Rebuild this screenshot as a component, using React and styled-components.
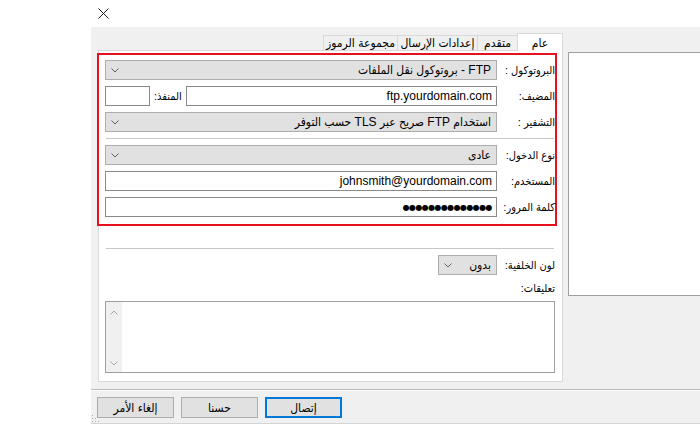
import React from 'react';
import styled, { createGlobalStyle } from 'styled-components';

const ARABIC = '"Liberation Sans", "DejaVu Sans Condensed", "DejaVu Sans", sans-serif';

const GlobalStyle = createGlobalStyle`
  html, body { margin: 0; padding: 0; background: #fff; }
  body { font-family: ${ARABIC}; font-size: 12px; color: #000; }
  * { box-sizing: border-box; }
`;

const Page = styled.div`
  width: 700px;
  height: 426px;
  overflow: hidden;
  display: flex;
  padding-left: 91px;
`;

const Window = styled.div`
  width: 609px;
  display: flex;
  flex-direction: column;
`;

const TitleBar = styled.div`
  height: 27px;
  flex-shrink: 0;
  padding: 8px 0 0 7px;
  display: flex;
  align-items: flex-start;
`;

const Dialog = styled.div`
  direction: rtl;
  background: #f0f0f0;
  height: 397px;
  display: flex;
  flex-direction: column;
  overflow: hidden;
  position: relative;
  border-bottom: 1px solid #d4d4d4;
`;

const Main = styled.div`
  display: flex;
  align-items: flex-start;
  gap: 5px;
  padding: 6px 0 0 7px;
`;

const SiteList = styled.div`
  flex: 1;
  margin-right: -3px;
  margin-top: 19px;
  height: 244px;
  background: #fff;
  border: 1px solid #a0a0a0;
`;

const Notebook = styled.div`
  width: 465px;
  flex-shrink: 0;
  display: flex;
  flex-direction: column;
`;

const TabRow = styled.div`
  display: flex;
  align-items: flex-end;
  height: 17px;
`;

const Tab = styled.div`
  width: ${p => p.$w}px;
  height: ${p => (p.$active ? 18 : 15)}px;
  margin-bottom: ${p => (p.$active ? -1 : 0)}px;
  margin-left: -1px;
  background: ${p => (p.$active ? '#fff' : '#f0f0f0')};
  border: 1px solid #d9d9d9;
  border-bottom: none;
  position: relative;
  z-index: ${p => (p.$active ? 1 : 0)};
  display: flex;
  align-items: center;
  justify-content: center;
  white-space: nowrap;
  font-size: 12px;
  font-stretch: condensed;
  line-height: 1;
  overflow: hidden;
`;

const Panel = styled.div`
  height: 332px;
  background: #fff;
  border: 1px solid #d9d9d9;
  display: flex;
  flex-direction: column;
`;

const RedBox = styled.div`
  margin: 2px 5px 0 -2px;
  border: 2px solid #e8101c;
  padding: 5px 0 7px 6px;
`;

const FormGrid = styled.div`
  display: grid;
  grid-template-columns: 52px 1fr;
  column-gap: 6px;
  row-gap: 6px;
`;

const Label = styled.div`
  height: ${p => p.$h || 20}px;
  display: flex;
  align-items: center;
  white-space: nowrap;
  font-size: 11px;
  font-stretch: condensed;
  grid-column: ${p => (p.$full ? '1 / -1' : 'auto')};
`;

const Field = styled.div`
  height: 20px;
  background: #fff;
  border: 1px solid #8a8a8a;
  display: flex;
  align-items: center;
  padding: 0 4px;
  white-space: nowrap;
  overflow: hidden;
  width: ${p => (p.$w ? `${p.$w}px` : 'auto')};
  flex: ${p => (p.$w ? '0 0 auto' : '1')};
`;

const Dots = styled.span`
  font-size: 8px;
  letter-spacing: -0.6px;
  font-family: "DejaVu Sans", sans-serif;
`;

const Select = styled.div`
  height: 20px;
  background: #e1e1e1;
  border: 1px solid #adadad;
  display: flex;
  align-items: center;
  justify-content: space-between;
  padding: 0 5px 0 5px;
  white-space: nowrap;
  font-stretch: condensed;
  width: ${p => (p.$w ? `${p.$w}px` : 'auto')};
`;

const FieldRow = styled.div`
  display: flex;
  align-items: center;
  gap: 4px;
`;

const Separator = styled.div`
  grid-column: 1 / -1;
  height: 1px;
  background: #c6c6c6;
  margin: 0 1px;
`;

const Lower = styled.div`
  padding: 22px 7px 0 6px;
`;

const LowerSep = styled.div`
  height: 1px;
  background: #c6c6c6;
  margin: 0 1px 6px 1px;
`;

const Comments = styled.div`
  grid-column: 1 / -1;
  height: 72px;
  background: #fff;
  border: 1px solid #a0a0a0;
  display: flex;
`;

const CommentText = styled.div`
  flex: 1;
`;

const Scrollbar = styled.div`
  width: 16px;
  background: #f0f0f0;
  display: flex;
  flex-direction: column;
  justify-content: space-between;
  align-items: center;
  padding: 8px 0 6px;
`;

const BottomSep = styled.div`
  margin-top: 7px;
  height: 2px;
  border-top: 1px solid #b9b9b9;
  border-bottom: 1px solid #fff;
`;

const ButtonRow = styled.div`
  display: flex;
  justify-content: flex-end;
  gap: 7px;
  padding: 6px 0 0 6px;
`;

const Button = styled.div`
  width: 77px;
  height: 21px;
  background: #e1e1e1;
  border: ${p => (p.$default ? '2px solid #0078d7' : '1px solid #adadad')};
  display: flex;
  align-items: center;
  justify-content: center;
  white-space: nowrap;
  font-size: 12px;
  font-stretch: condensed;
`;

const Grip = styled.svg`
  position: absolute;
  left: 1px;
  bottom: 1px;
`;

const Chevron = ({ up, color = '#606060' }) => (
  <svg width="8" height="5" viewBox="0 0 8 5">
    <polyline
      points={up ? '0.5,4.5 4,1 7.5,4.5' : '0.5,0.5 4,4 7.5,0.5'}
      fill="none"
      stroke={color}
      strokeWidth="1"
    />
  </svg>
);

const CloseIcon = () => (
  <svg width="11" height="11" viewBox="0 0 11 11">
    <line x1="0.5" y1="0.5" x2="10.5" y2="10.5" stroke="#1a1a1a" strokeWidth="1" />
    <line x1="10.5" y1="0.5" x2="0.5" y2="10.5" stroke="#1a1a1a" strokeWidth="1" />
  </svg>
);

export default function App() {
  return (
    <>
      <GlobalStyle />
      <Page>
        <Window>
          <TitleBar>
            <CloseIcon />
          </TitleBar>
          <Dialog>
            <Main>
              <SiteList />
              <Notebook>
                <TabRow>
                  <Tab $w={46} $active>عام</Tab>
                  <Tab $w={41}>متقدم</Tab>
                  <Tab $w={81}>إعدادات الإرسال</Tab>
                  <Tab $w={75}>مجموعة الرموز</Tab>
                </TabRow>
                <Panel>
                  <RedBox>
                    <FormGrid>
                      <Label>البروتوكول :</Label>
                      <Select>
                        <span>FTP - بروتوكول نقل الملفات</span>
                        <Chevron />
                      </Select>

                      <Label>المضيف:</Label>
                      <FieldRow>
                        <Field>ftp.yourdomain.com</Field>
                        <Label>المنفذ:</Label>
                        <Field $w={45} />
                      </FieldRow>

                      <Label>التشفير :</Label>
                      <Select>
                        <span>استخدام FTP صريح عبر TLS حسب التوفر</span>
                        <Chevron />
                      </Select>

                      <Separator />

                      <Label>نوع الدخول:</Label>
                      <Select>
                        <span>عادى</span>
                        <Chevron />
                      </Select>

                      <Label>المستخدم:</Label>
                      <Field>johnsmith@yourdomain.com</Field>

                      <Label>كلمة المرور:</Label>
                      <Field>
                        <Dots>●●●●●●●●●●●●●●</Dots>
                      </Field>
                    </FormGrid>
                  </RedBox>
                  <Lower>
                    <LowerSep />
                    <FormGrid>
                      <Label>لون الخلفية:</Label>
                      <FieldRow>
                        <Select $w={59}>
                          <span>بدون</span>
                          <Chevron />
                        </Select>
                      </FieldRow>
                      <Label $full $h={14}>تعليقات:</Label>
                      <Comments>
                        <CommentText />
                        <Scrollbar>
                          <Chevron up color="#a8a8a8" />
                          <Chevron color="#a8a8a8" />
                        </Scrollbar>
                      </Comments>
                    </FormGrid>
                  </Lower>
                </Panel>
              </Notebook>
            </Main>
            <BottomSep />
            <ButtonRow>
              <Button $default>إتصال</Button>
              <Button>حسنا</Button>
              <Button>إلغاء الأمر</Button>
            </ButtonRow>
            <Grip width="7" height="7" viewBox="0 0 7 7">
              <rect x="0" y="0" width="1" height="1" fill="#b0b0b0" />
              <rect x="0" y="3" width="1" height="1" fill="#b0b0b0" />
              <rect x="3" y="3" width="1" height="1" fill="#b0b0b0" />
              <rect x="0" y="6" width="1" height="1" fill="#b0b0b0" />
              <rect x="3" y="6" width="1" height="1" fill="#b0b0b0" />
              <rect x="6" y="6" width="1" height="1" fill="#b0b0b0" />
            </Grip>
          </Dialog>
        </Window>
      </Page>
    </>
  );
}
